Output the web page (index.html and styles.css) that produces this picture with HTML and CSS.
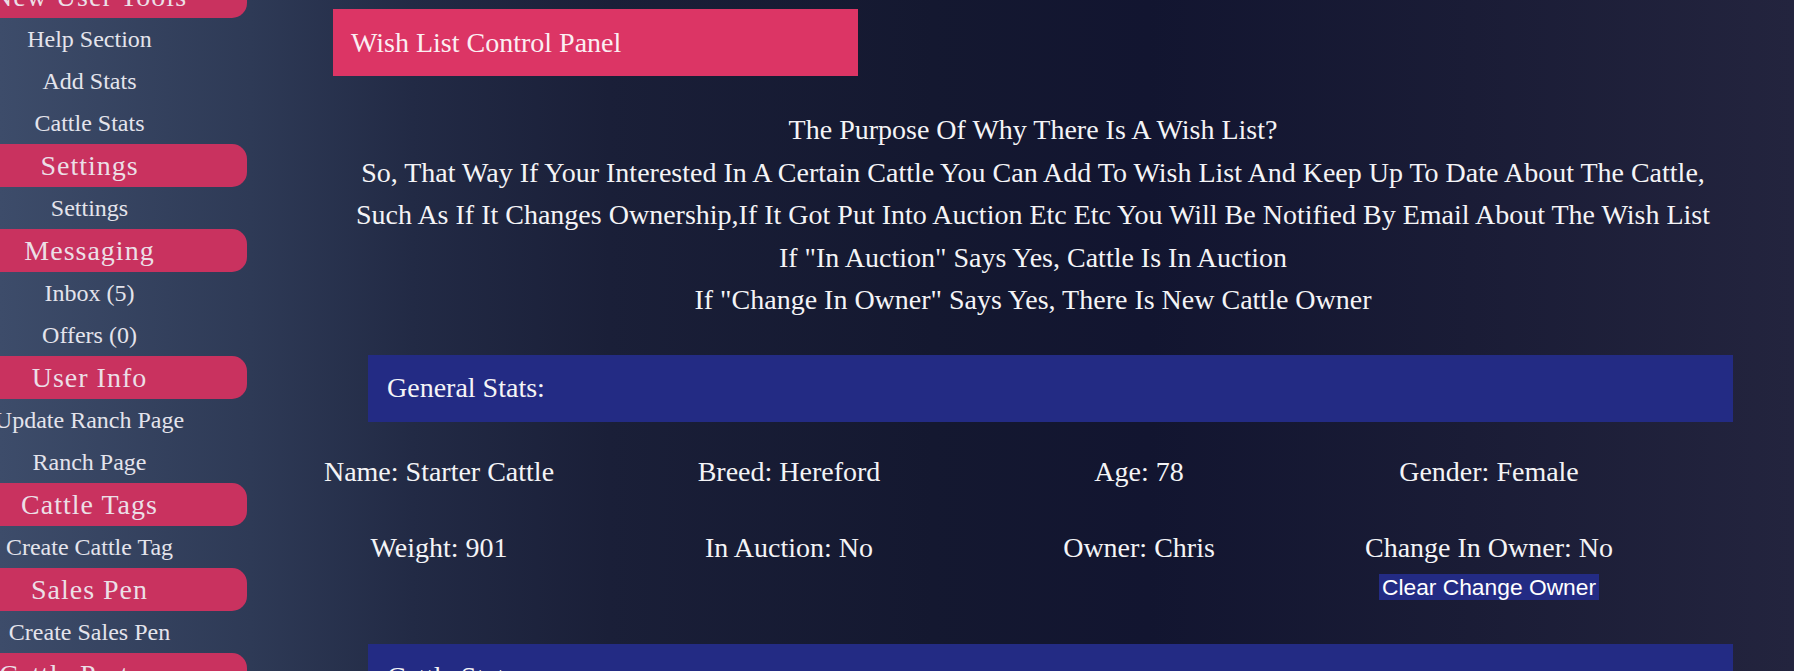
FILE: index.html
```html
<!DOCTYPE html>
<html lang="en">
<head>
    <meta charset="UTF-8">
    <meta name="viewport" content="width=device-width, initial-scale=1.0">
    <title>Wish List</title>
    <link rel="stylesheet" href="styles.css">
</head>
<body>
    <div id="sidebar">
        <div class="menu-title">New User Tools</div>
        <a class="menu-link" href="#">Help Section</a>
        <a class="menu-link" href="#">Add Stats</a>
        <a class="menu-link" href="#">Cattle Stats</a>
        <div class="menu-title">Settings</div>
        <a class="menu-link" href="#">Settings</a>
        <div class="menu-title">Messaging</div>
        <a class="menu-link" href="#">Inbox (5)</a>
        <a class="menu-link" href="#">Offers (0)</a>
        <div class="menu-title">User Info</div>
        <a class="menu-link" href="#">Update Ranch Page</a>
        <a class="menu-link" href="#">Ranch Page</a>
        <div class="menu-title">Cattle Tags</div>
        <a class="menu-link" href="#">Create Cattle Tag</a>
        <div class="menu-title">Sales Pen</div>
        <a class="menu-link" href="#">Create Sales Pen</a>
        <div class="menu-title">Cattle Partners</div>
    </div>

    <div id="main">
        <div class="panel-title">Wish List Control Panel</div>

        <div class="intro">
            The Purpose Of Why There Is A Wish List?<br>
            So, That Way If Your Interested In A Certain Cattle You Can Add To Wish List And Keep Up To Date About The Cattle,<br>
            Such As If It Changes Ownership,If It Got Put Into Auction Etc Etc You Will Be Notified By Email About The Wish List<br>
            If "In Auction" Says Yes, Cattle Is In Auction<br>
            If "Change In Owner" Says Yes, There Is New Cattle Owner
        </div>

        <div class="section-bar">General Stats:</div>
        <div class="stats">
            <div class="stat">Name: Starter Cattle</div>
            <div class="stat">Breed: Hereford</div>
            <div class="stat">Age: 78</div>
            <div class="stat">Gender: Female</div>
            <div class="stat">Weight: 901</div>
            <div class="stat">In Auction: No</div>
            <div class="stat">Owner: Chris</div>
            <div class="stat">
                Change In Owner: No<br>
                <button class="clear-btn">Clear Change Owner</button>
            </div>
        </div>

        <div class="section-bar next">Cattle Stats:</div>
    </div>
</body>
</html>
```

FILE: styles.css
```css
body {
    margin: 0;
    display: flex;
    align-items: flex-start;
    overflow: hidden;
    font-family: "Liberation Serif", "Times New Roman", serif;
    color: #f4f4f6;
    background: linear-gradient(to right, #3d4c6a 0%, #2e3a56 14%, #222a45 23%, #1a1f38 34%, #141830 52%, #121530 64%, #1a1c36 82%, #23243e 100%);
}

#sidebar {
    width: 315px;
    margin-left: -68px;
    margin-top: -25px;
    flex-shrink: 0;
    display: flex;
    flex-direction: column;
    text-align: center;
}

.menu-title {
    height: 43px;
    line-height: 43px;
    background-color: #c9325f;
    border-radius: 0 15px 15px 0;
    font-size: 28px;
    letter-spacing: 1px;
    color: #ecdfe6;
}

.menu-link {
    height: 42px;
    line-height: 42px;
    font-size: 24px;
    color: #e4e4ec;
    text-decoration: none;
    white-space: nowrap;
}

#main {
    flex: 1;
    padding-left: 25px;
    font-size: 28px;
}

.panel-title {
    margin: 9px 0 0 61px;
    width: 525px;
    height: 67px;
    box-sizing: border-box;
    padding: 0 18px;
    display: flex;
    align-items: center;
    background-color: #dc3565;
    color: #fbeef2;
}

.intro {
    margin-top: 33px;
    text-align: center;
    line-height: 42.6px;
    white-space: nowrap;
}

.section-bar {
    margin: 33px 0 0 96px;
    width: 1365px;
    height: 67px;
    box-sizing: border-box;
    padding: 0 19px;
    display: flex;
    align-items: center;
    background-color: #232b84;
}

.section-bar.next {
    margin-top: 0;
}

.stats {
    margin-left: -8px;
    padding: 34px 0 44px;
    display: grid;
    grid-template-columns: repeat(4, 350px);
    row-gap: 44px;
}

.stat {
    text-align: center;
    line-height: 32px;
    white-space: nowrap;
}

.clear-btn {
    margin-top: 10px;
    padding: 0 3px;
    border: none;
    background-color: #232b84;
    color: #ffffff;
    font-family: "Liberation Sans", Arial, sans-serif;
    font-size: 22.8px;
    line-height: 26px;
    vertical-align: top;
}
```
